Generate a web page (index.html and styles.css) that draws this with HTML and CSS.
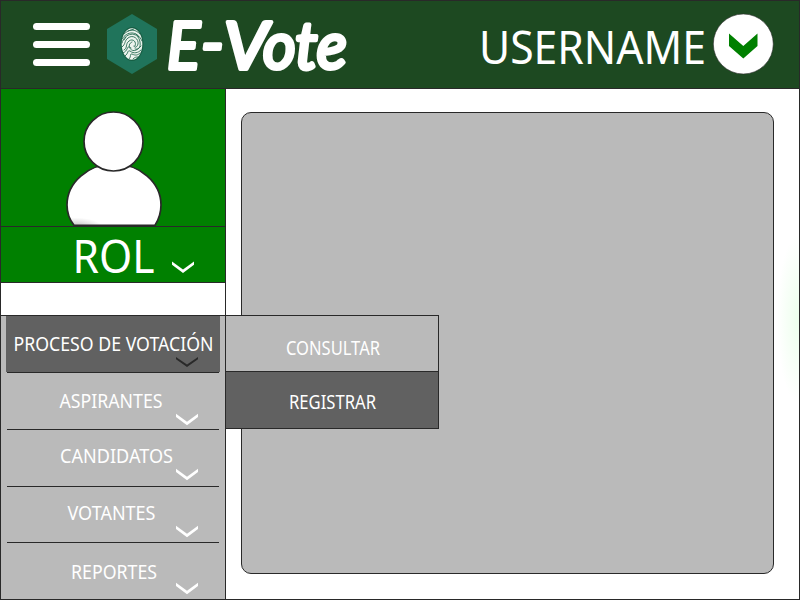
FILE: index.html
```html
<!DOCTYPE html>
<html lang="es">
<head>
<meta charset="utf-8">
<title>E-Vote</title>
<link rel="stylesheet" href="styles.css">
</head>
<body>
<div class="app">
  <header class="header">
    <div class="burger"><span></span><span></span><span></span></div>
    <svg class="logo" width="50" height="60" viewBox="0 0 50 60">
      <path fill="#20745b" d="M25 0 50 15V45L25 60 0 45V15z"/>
      <ellipse cx="25" cy="30" rx="11.500" ry="17" fill="#175f45"/>
      <ellipse cx="25" cy="30" rx="10.300" ry="15.800" fill="#edf4ee"/>
      <g fill="none" stroke="#276b52" stroke-width=".9" stroke-linecap="round">
        <path d="M17 20C22 15 28 14.500 33 20M15 25C20 17 30 16 35 27M15 29C17 19 31 16 33 28 34 34 31 36 28 35M15 33C19 30 17 27 21 24 26 20 32 25 31 30 30 34 27 34 27 32M17 36C21 34 18 30 22 27 26 24 30 28 28 32M24 34C21 33 22 29 25 28M16 39C21 37 20 32 22 33 25 38 29 38 34 32M18 42C22 39 20 36 23 37 27 40 31 39 34 36M22 45C25 42 22 40 25 40 29 42 31 41 33 39M26 45C28 43 29 43 31 43M21 17 27 15M19 23 17 26M29 20 32 23"/>
      </g>
    </svg>
    <svg class="brand" width="190" height="88" viewBox="0 0 190 88">
      <text x="9" y="67.500" textLength="33" lengthAdjust="spacingAndGlyphs">E</text>
      <text x="43" y="65" textLength="23" lengthAdjust="spacingAndGlyphs">-</text>
      <text x="66" y="67.500" textLength="44" lengthAdjust="spacingAndGlyphs">V</text>
      <text x="105" y="67.500" textLength="84" lengthAdjust="spacingAndGlyphs">ote</text>
    </svg>
    <svg class="username" width="234" height="88" viewBox="0 0 234 88"><text x="1" y="64" textLength="227" lengthAdjust="spacingAndGlyphs">USERNAME</text></svg>
    <svg class="account" width="62" height="62" viewBox="0 0 62 62">
      <circle cx="31.300" cy="31" r="30" fill="#fff" stroke="#292929" stroke-width=".6"/>
      <path d="M17 20.500 31.300 33 45.500 20.500V33L31.300 45.500 17 33z" fill="#008000"/>
    </svg>
  </header>
  <div class="body">
    <aside class="sidebar">
      <div class="avatar">
        <svg width="224" height="137" viewBox="0 0 224 137">
          <defs><radialGradient id="shade" gradientUnits="userSpaceOnUse" cx="74" cy="138" r="28" gradientTransform="translate(0 89) scale(1 .36)"><stop stop-color="#bbb"/><stop offset="1" stop-color="#fff"/></radialGradient></defs>
          <path d="M73 136.300C68 130 66 123 66 116A47 41 0 0 1 160 116C160 123 158 130 154 136.300z" fill="url(#shade)" stroke="#292929" stroke-width="1.700"/>
          <circle cx="112.500" cy="52.500" r="29.500" fill="#fff" stroke="#292929" stroke-width="1.700"/>
        </svg>
      </div>
      <div class="role">
        <svg width="224" height="55" viewBox="0 0 224 55"><text x="71.500" y="45.500" textLength="82" lengthAdjust="spacingAndGlyphs">ROL</text><path class="chevron" d="M171 34.500 182 42.500 193 34.500V37.800L182 46 171 37.800z"/></svg>
      </div>
      <nav class="menu">
        <div class="item active"><svg width="224" height="56" viewBox="1 316 224 56"><text x="13.500" y="351" textLength="200" lengthAdjust="spacingAndGlyphs">PROCESO DE VOTACIÓN</text><path class="chevron" d="M176 357 187 364.500 198 357V359.200L187 367 176 359.200z"/></svg></div>
        <div class="item"><svg width="224" height="56" viewBox="1 373 224 56"><text x="59.500" y="408" textLength="103" lengthAdjust="spacingAndGlyphs">ASPIRANTES</text><path class="chevron" d="M176 413.800 187 421.800 198 413.800V417.100L187 425.300 176 417.100z"/></svg></div>
        <div class="item"><svg width="224" height="56" viewBox="1 430 224 56"><text x="60" y="463" textLength="113" lengthAdjust="spacingAndGlyphs">CANDIDATOS</text><path class="chevron" d="M176 468.800 187 476.800 198 468.800V472.100L187 480.300 176 472.100z"/></svg></div>
        <div class="item short"><svg width="224" height="55" viewBox="1 487 224 55"><text x="67.500" y="520" textLength="88" lengthAdjust="spacingAndGlyphs">VOTANTES</text><path class="chevron" d="M176 525.800 187 533.800 198 525.800V529.100L187 537.300 176 529.100z"/></svg></div>
        <div class="item last"><svg width="224" height="56" viewBox="1 543 224 56"><text x="71" y="579" textLength="86" lengthAdjust="spacingAndGlyphs">REPORTES</text><path class="chevron" d="M176 582.800 187 590.800 198 582.800V586.100L187 594.300 176 586.100z"/></svg></div>
      </nav>
    </aside>
    <main class="content"><section class="panel"></section></main>
  </div>
  <div class="submenu">
    <div class="option"><svg width="212" height="55" viewBox="226 316 212 55"><text x="286" y="355" textLength="94" lengthAdjust="spacingAndGlyphs">CONSULTAR</text></svg></div>
    <div class="option selected"><svg width="212" height="56" viewBox="226 372 212 56"><text x="289" y="409" textLength="87" lengthAdjust="spacingAndGlyphs">REGISTRAR</text></svg></div>
  </div>
</div>
</body>
</html>
```
FILE: styles.css
```css
* { box-sizing: border-box; }
body { margin: 0; background: #fff; font-family: "Noto Sans", "Open Sans", sans-serif; }
svg { display: block; flex: none; overflow: visible; }
text { fill: #fff; }
.app { position: relative; width: 800px; height: 600px; border: 1px solid #292929; display: flex; flex-direction: column; overflow: hidden; }
.header { height: 88px; flex: none; background: #1d4921; border-bottom: 1px solid #292929; display: flex; align-items: flex-start; }
.burger { margin: 22px 0 0 32px; width: 57px; display: flex; flex-direction: column; gap: 11px; }
.burger span { height: 7px; border-radius: 4px; background: #fff; }
.logo { margin: 13px 0 0 17px; }
.brand { margin: 0 0 0 1px; }
.brand text { font-family: "Lato", sans-serif; font-style: italic; font-weight: 400; font-size: 65px; stroke: #fff; stroke-width: 4px; stroke-linejoin: round; }
.username { margin: -1px 0 0 130px; }
.username text, .role text { font-size: 46px; }
.account { margin: 12px 0 0 0; }
.body { display: flex; flex: 1; min-height: 0; }
.sidebar { width: 225px; flex: none; border-right: 1px solid #292929; display: flex; flex-direction: column; }
.avatar { height: 138px; background: #008000; border-bottom: 1px solid #292929; }
.role { height: 56px; background: #008000; border-bottom: 1px solid #292929; }
.chevron { fill: #fff; }
.menu { margin-top: 32px; border-top: 1px solid #292929; background: #bababa; }
.item { height: 57px; background: linear-gradient(#292929, #292929) 6px 100% / 212px 1px no-repeat; }
.item.short { height: 56px; }
.item.last { background: none; height: 56px; }
.item text, .option text { font-size: 19.500px; }
.item.active { background: linear-gradient(#292929, #292929) 6px 100% / 212px 1px no-repeat, linear-gradient(#616161, #616161) 5px 0 / 214px 56px no-repeat; }
.active .chevron { fill: #292929; }
.content { flex: 1; padding: 23px 25px 25px 15px; background: radial-gradient(ellipse 22px 85px at 100% 230px, #ecffec, #fff); }
.panel { height: 462px; border: 1px solid #292929; border-radius: 10px; background: #bababa; }
.submenu { position: absolute; left: 224px; top: 314px; width: 214px; border: 1px solid #292929; background: #bababa; }
.option.selected { background: #616161; border-top: 1px solid #292929; }
```
